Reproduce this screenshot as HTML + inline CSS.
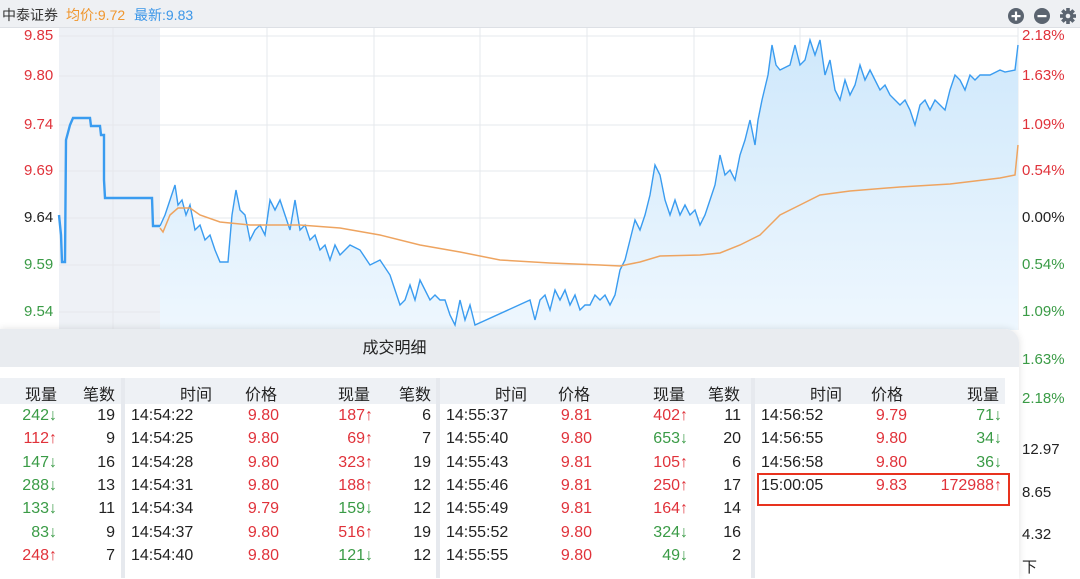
<!DOCTYPE html>
<html><head><meta charset="utf-8"><style>
*{margin:0;padding:0;box-sizing:border-box}
body{width:1080px;height:569px;overflow:hidden;background:#fff;font-family:"Liberation Sans","Noto Sans CJK SC",sans-serif;position:relative}
.hdr{position:absolute;left:0;top:0;width:1080px;height:28px;background:#eef0f3;border-bottom:1px solid #dde0e5}
.hdr span{position:absolute;top:5px;font-size:14px}
.lab{position:absolute;font-size:15px;line-height:16px}
.r{color:#e0323a}.g{color:#3a9b46}.k{color:#222}
.panel{position:absolute;left:0;top:329px;width:1019px;height:250px;background:#fff;border-top-right-radius:14px;box-shadow:0 0 8px rgba(0,0,0,.12)}
.tbar{position:absolute;left:0;top:0;width:1019px;height:38px;background:#e9ecf0;border-top-right-radius:14px;font-size:16px;text-align:center;line-height:40px;color:#222;padding-right:230px}
.th{position:absolute;top:49px;height:26px;background:#eef1f5}
.cell{position:absolute;font-size:16px;white-space:nowrap}
.sep{position:absolute;top:49px;width:4px;height:200px;background:#e6e9ee}
</style></head><body>
<div class="hdr">
<span style="left:2px;color:#333">中泰证券</span>
<span style="left:66px;color:#f0962d">均价:9.72</span>
<span style="left:134px;color:#3b96e8">最新:9.83</span>
<svg style="position:absolute;left:1007px;top:7px" width="70" height="18">
<circle cx="9" cy="9" r="8" fill="#5b6470"/><rect x="4.5" y="8" width="9" height="2.2" fill="#fff"/><rect x="7.9" y="4.5" width="2.2" height="9" fill="#fff"/>
<circle cx="35" cy="9" r="8" fill="#5b6470"/><rect x="30.5" y="8" width="9" height="2.2" fill="#fff"/>
<g transform="translate(61,9)" fill="#5b6470"><circle r="5.5"/><g><rect x="-1.8" y="-8" width="3.6" height="16"/><rect x="-8" y="-1.8" width="16" height="3.6"/><rect x="-1.8" y="-8" width="3.6" height="16" transform="rotate(45)"/><rect x="-1.8" y="-8" width="3.6" height="16" transform="rotate(-45)"/></g><circle r="2.3" fill="#eef0f3"/></g>
</svg>
</div>
<svg style="position:absolute;left:0;top:28px" width="1080" height="302">
<defs><linearGradient id="gf" x1="0" y1="0" x2="0" y2="1"><stop offset="0" stop-color="#cfe8fb"/><stop offset="1" stop-color="#eef7fe"/></linearGradient></defs>
<rect x="59" y="0" width="101" height="302" fill="#eef1f6"/>
<g stroke="#e6e8ec" stroke-width="1">
<line x1="59" y1="8" x2="1018" y2="8"/><line x1="59" y1="48" x2="1018" y2="48"/><line x1="59" y1="97" x2="1018" y2="97"/><line x1="59" y1="143" x2="1018" y2="143"/><line x1="59" y1="190" x2="1018" y2="190"/><line x1="59" y1="237" x2="1018" y2="237"/><line x1="59" y1="284" x2="1018" y2="284"/>
<line x1="113" y1="0" x2="113" y2="302"/><line x1="267" y1="0" x2="267" y2="302"/><line x1="374" y1="0" x2="374" y2="302"/><line x1="480" y1="0" x2="480" y2="302"/><line x1="587" y1="0" x2="587" y2="302"/><line x1="694" y1="0" x2="694" y2="302"/><line x1="800" y1="0" x2="800" y2="302"/><line x1="907" y1="0" x2="907" y2="302"/>
<line x1="1018" y1="0" x2="1018" y2="302"/>
</g>
<g transform="translate(0,-28)">
<polygon fill="url(#gf)" points="160,226 165,215 170,200 175,185 178,205 182,200 186,215 190,205 195,230 200,225 205,240 210,235 215,250 220,262 228,262 232,215 236,190 240,210 245,215 250,240 255,230 260,225 265,235 270,200 275,210 280,200 285,215 290,230 295,200 300,230 305,225 310,240 315,235 320,250 325,245 330,260 335,245 340,255 350,245 360,250 370,265 380,260 390,275 395,290 400,305 405,300 410,285 415,300 420,280 425,290 430,300 435,295 440,300 445,300 450,315 455,325 460,300 465,320 470,305 475,325 530,300 535,320 540,300 545,295 550,310 555,290 560,300 565,290 570,305 575,295 580,310 585,305 590,305 595,295 600,300 605,295 610,305 615,295 620,270 625,260 630,240 635,220 640,230 645,215 650,195 655,165 660,175 665,200 670,215 675,200 680,215 685,205 690,215 695,210 700,225 705,215 710,200 715,185 720,155 725,175 730,170 735,180 740,155 745,140 750,120 755,145 758,120 762,100 768,75 772,45 776,65 780,70 790,65 795,45 800,65 805,60 810,40 815,55 820,40 825,75 830,60 835,90 840,100 845,80 850,95 855,85 860,65 865,80 870,70 875,80 880,90 885,85 890,95 895,100 900,105 905,100 910,110 915,125 920,105 925,100 930,110 935,100 940,105 945,110 950,90 955,75 960,80 965,90 970,75 975,80 980,75 990,75 1000,70 1005,72 1015,70 1018,45 1018,330 160,330"/>
<polyline fill="none" stroke="#3a9cf0" stroke-width="2.4" points="59,215 60,225 61,235 62,262 65,262 66,140 70,125 73,118 90,118 91,126 100,126 101,135 104,135 104,180 105,198 152,198 153,226 160,226"/>
<polyline fill="none" stroke="#3a9cf0" stroke-width="1.4" points="160,226 165,215 170,200 175,185 178,205 182,200 186,215 190,205 195,230 200,225 205,240 210,235 215,250 220,262 228,262 232,215 236,190 240,210 245,215 250,240 255,230 260,225 265,235 270,200 275,210 280,200 285,215 290,230 295,200 300,230 305,225 310,240 315,235 320,250 325,245 330,260 335,245 340,255 350,245 360,250 370,265 380,260 390,275 395,290 400,305 405,300 410,285 415,300 420,280 425,290 430,300 435,295 440,300 445,300 450,315 455,325 460,300 465,320 470,305 475,325 530,300 535,320 540,300 545,295 550,310 555,290 560,300 565,290 570,305 575,295 580,310 585,305 590,305 595,295 600,300 605,295 610,305 615,295 620,270 625,260 630,240 635,220 640,230 645,215 650,195 655,165 660,175 665,200 670,215 675,200 680,215 685,205 690,215 695,210 700,225 705,215 710,200 715,185 720,155 725,175 730,170 735,180 740,155 745,140 750,120 755,145 758,120 762,100 768,75 772,45 776,65 780,70 790,65 795,45 800,65 805,60 810,40 815,55 820,40 825,75 830,60 835,90 840,100 845,80 850,95 855,85 860,65 865,80 870,70 875,80 880,90 885,85 890,95 895,100 900,105 905,100 910,110 915,125 920,105 925,100 930,110 935,100 940,105 945,110 950,90 955,75 960,80 965,90 970,75 975,80 980,75 990,75 1000,70 1005,72 1015,70 1018,45"/>
<polyline fill="none" stroke="#eea460" stroke-width="1.5" points="160,228 163,232 170,215 178,208 190,208 200,215 220,222 250,225 300,225 340,228 380,235 420,245 460,252 500,260 550,263 600,265 620,266 640,262 660,256 700,255 720,253 740,245 760,235 780,215 800,205 820,195 850,191 900,187 950,184 1000,178 1015,175 1018,145"/>
</g>
</svg>
<div class="lab r" style="left:24px;top:28px">9.85</div>
<div class="lab r" style="left:24px;top:68px">9.80</div>
<div class="lab r" style="left:24px;top:117px">9.74</div>
<div class="lab r" style="left:24px;top:163px">9.69</div>
<div class="lab k" style="left:24px;top:210px">9.64</div>
<div class="lab g" style="left:24px;top:257px">9.59</div>
<div class="lab g" style="left:24px;top:304px">9.54</div>
<div class="lab r" style="left:1022px;top:28px">2.18%</div>
<div class="lab r" style="left:1022px;top:68px">1.63%</div>
<div class="lab r" style="left:1022px;top:117px">1.09%</div>
<div class="lab r" style="left:1022px;top:163px">0.54%</div>
<div class="lab k" style="left:1022px;top:210px">0.00%</div>
<div class="lab g" style="left:1022px;top:257px">0.54%</div>
<div class="lab g" style="left:1022px;top:304px">1.09%</div>
<div class="lab g" style="left:1022px;top:352px">1.63%</div>
<div class="lab g" style="left:1022px;top:391px">2.18%</div>
<div class="lab k" style="left:1022px;top:442px">12.97</div>
<div class="lab k" style="left:1022px;top:485px">8.65</div>
<div class="lab k" style="left:1022px;top:527px">4.32</div>
<div class="lab k" style="left:1022px;top:560px">下</div>
<div class="panel">
<div class="tbar">成交明细</div>
<div class="th" style="left:0;width:1005px"></div>
<div class="sep" style="left:121px"></div><div class="sep" style="left:436px"></div><div class="sep" style="left:751px"></div>
<div id="rows"></div>
<div style="position:absolute;left:757px;top:144px;width:253px;height:33px;border:2.5px solid #e8321e"></div>
</div>
<script>
var R=document.getElementById('rows'),h='';
function c(x,y,t,cl,al){h+='<div class="cell '+(cl||'k')+'" style="'+(al=='r'?'right:'+(1019-x):'left:'+x)+'px;top:'+y+'px">'+t+'</div>';}
var hy=52;
[[57,'现量'],[115,'笔数'],[212,'时间'],[277,'价格'],[370,'现量'],[431,'笔数'],[527,'时间'],[590,'价格'],[685,'现量'],[740,'笔数'],[842,'时间'],[903,'价格'],[999,'现量']].forEach(function(a){c(a[0],hy,a[1],'k','r')});
var up='↑',dn='↓';
var g1=[['242'+dn,'g',19],['112'+up,'r',9],['147'+dn,'g',16],['288'+dn,'g',13],['133'+dn,'g',11],['83'+dn,'g',9],['248'+up,'r',7]];
var g2=[['14:54:22','9.80','187'+up,'r',6],['14:54:25','9.80','69'+up,'r',7],['14:54:28','9.80','323'+up,'r',19],['14:54:31','9.80','188'+up,'r',12],['14:54:34','9.79','159'+dn,'g',12],['14:54:37','9.80','516'+up,'r',19],['14:54:40','9.80','121'+dn,'g',12]];
var g3=[['14:55:37','9.81','402'+up,'r',11],['14:55:40','9.80','653'+dn,'g',20],['14:55:43','9.81','105'+up,'r',6],['14:55:46','9.81','250'+up,'r',17],['14:55:49','9.81','164'+up,'r',14],['14:55:52','9.80','324'+dn,'g',16],['14:55:55','9.80','49'+dn,'g',2]];
var g4=[['14:56:52','9.79','71'+dn,'g'],['14:56:55','9.80','34'+dn,'g'],['14:56:58','9.80','36'+dn,'g'],['15:00:05','9.83','172988'+up,'r']];
for(var i=0;i<7;i++){var y=78+i*23.3;
c(57,y,g1[i][0],g1[i][1],'r');c(115,y,g1[i][2],'k','r');
c(131,y,g2[i][0]);c(279,y,g2[i][1],'r','r');c(373,y,g2[i][2],g2[i][3],'r');c(431,y,g2[i][4],'k','r');
c(446,y,g3[i][0]);c(592,y,g3[i][1],'r','r');c(688,y,g3[i][2],g3[i][3],'r');c(741,y,g3[i][4],'k','r');
if(i<4){c(761,y,g4[i][0]);c(907,y,g4[i][1],'r','r');c(1002,y,g4[i][2],g4[i][3],'r');}}
R.innerHTML=h;
</script>
</body></html>
